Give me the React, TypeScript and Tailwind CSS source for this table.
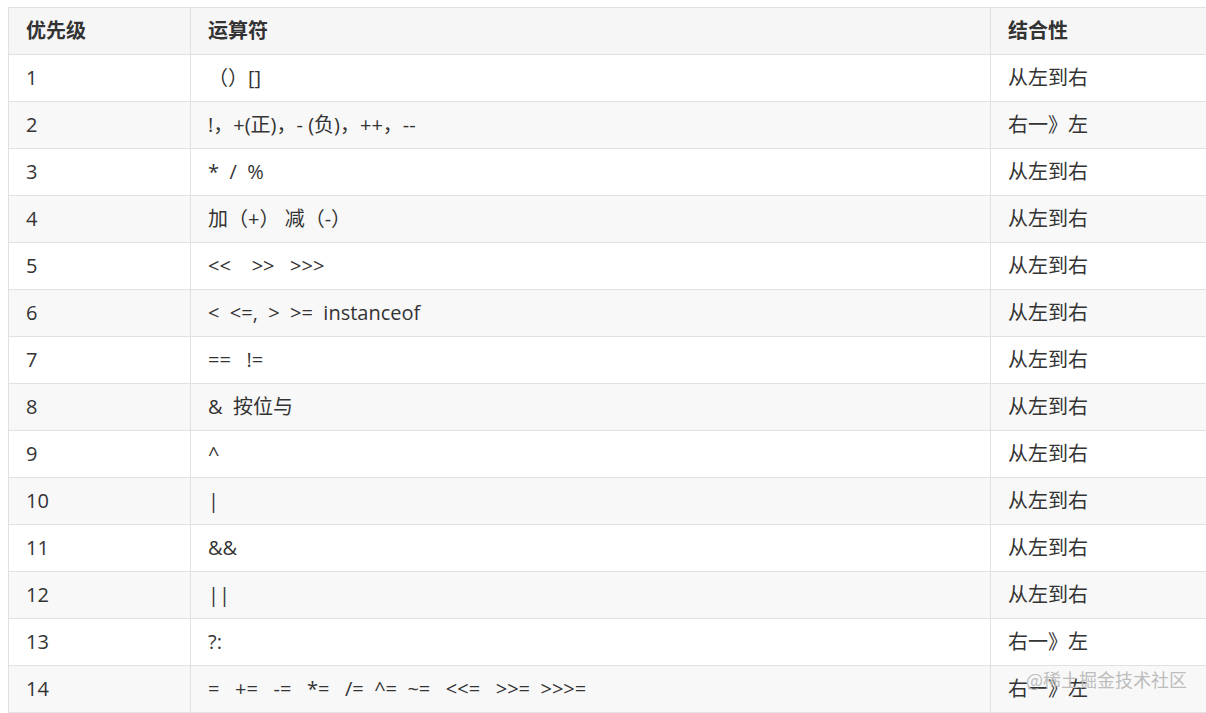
const rows: [string, string, string][] = [
  ["1", "（）[]", "从左到右"],
  ["2", "!，+(正)，- (负)，++，--", "右一》左"],
  ["3", "*  /  %", "从左到右"],
  ["4", "加（+） 减（-）", "从左到右"],
  ["5", "<<    >>   >>>", "从左到右"],
  ["6", "<  <=,  >  >=  instanceof", "从左到右"],
  ["7", "==   !=", "从左到右"],
  ["8", "&  按位与", "从左到右"],
  ["9", "^", "从左到右"],
  ["10", "|", "从左到右"],
  ["11", "&&", "从左到右"],
  ["12", "||", "从左到右"],
  ["13", "?:", "右一》左"],
  ["14", "=   +=   -=   *=   /=  ^=  ~=   <<=   >>=  >>>=", "右一》左"],
];

export default function App() {
  return (
    <div
      className="relative h-[713px] w-[1206px] overflow-hidden bg-white pl-[8px] pt-[7px] text-[#333]"
      style={{ fontFamily: '"Open Sans", "Noto Sans CJK SC", sans-serif' }}
    >
      <table className="w-[1300px] table-fixed border-collapse text-[20px]">
        <colgroup>
          <col className="w-[182px]" />
          <col className="w-[800px]" />
          <col className="w-[318px]" />
        </colgroup>
        <thead>
          <tr className="h-[47px] bg-[#f6f6f6]">
            {["优先级", "运算符", "结合性"].map((h) => (
              <th key={h} className="border border-[#dfe2e5] pl-[17px] text-left font-bold">
                {h}
              </th>
            ))}
          </tr>
        </thead>
        <tbody>
          {rows.map(([a, b, c], i) => (
            <tr key={a} className={i % 2 === 1 ? "h-[47px] bg-[#f8f8f8]" : "h-[47px] bg-white"}>
              <td className="border border-[#dfe2e5] pl-[17px]">{a}</td>
              <td className="border border-[#dfe2e5] pl-[17px] whitespace-pre">{b}</td>
              <td className="border border-[#dfe2e5] pl-[17px]">{c}</td>
            </tr>
          ))}
        </tbody>
      </table>

      {/* watermark */}
      <div
        className="absolute left-[1026px] top-[670px] text-[18px] leading-none text-[#bdbdbd]"
        style={{ fontFamily: '"Noto Sans CJK SC", sans-serif' }}
      >
        @稀土掘金技术社区
      </div>
    </div>
  );
}
